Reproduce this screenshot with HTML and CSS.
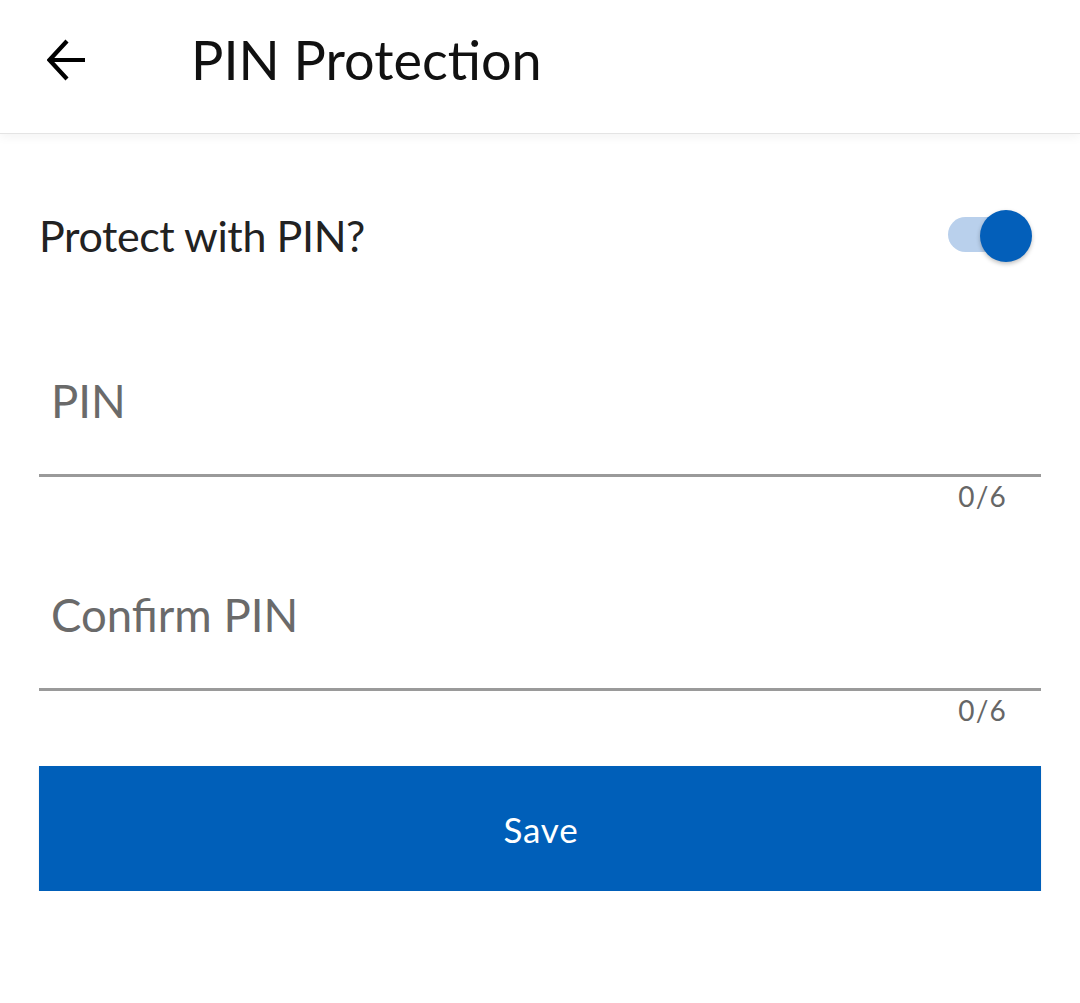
FILE: index.html
```html
<!DOCTYPE html>
<html>
<head>
<meta charset="utf-8">
<link rel="stylesheet" href="styles.css">
</head>
<body>
<header class="appbar">
  <svg class="back" width="40" height="48" viewBox="0 0 40 48">
    <path d="M38 24H3 M20 5L2.5 24L20 43" fill="none" stroke="#000" stroke-width="4.2" stroke-linejoin="miter"/>
  </svg>
  <h1 class="title">PIN Protection</h1>
</header>
<main class="content">
  <div class="toggle-row">
    <span class="toggle-label">Protect with PIN?</span>
    <div class="switch">
      <div class="track"></div>
      <div class="thumb"></div>
    </div>
  </div>
  <div class="field first">
    <div class="input"><span class="placeholder">PIN</span></div>
    <div class="counter">0/6</div>
  </div>
  <div class="field second">
    <div class="input"><span class="placeholder">Confirm PIN</span></div>
    <div class="counter">0/6</div>
  </div>
  <button class="save">Save</button>
</main>
</body>
</html>
```
FILE: styles.css
```css
html, body {
  margin: 0;
  padding: 0;
  background: #fff;
  font-family: Lato, "Noto Sans", sans-serif;
}
.appbar {
  height: 134px;
  box-sizing: border-box;
  display: flex;
  align-items: center;
  padding: 0 0 14px 47px;
  border-bottom: 1px solid #e4e4e4;
  box-shadow: 0 3px 10px rgba(0,0,0,0.05);
  position: relative;
}
.back {
  display: block;
  flex: none;
}
.title {
  margin: 0 0 0 104px;
  font-size: 54px;
  font-weight: 400;
  color: #111;
  line-height: 60px;
}
.content {
  padding: 0 39px;
}
.toggle-row {
  margin-top: 52px;
  height: 100px;
  display: flex;
  align-items: center;
  justify-content: space-between;
}
.toggle-label {
  font-size: 43px;
  letter-spacing: -0.4px;
  color: #222;
  line-height: 52px;
}
.switch {
  position: relative;
  width: 84px;
  height: 52px;
  margin-right: 9px;
}
.track {
  position: absolute;
  left: 0;
  top: 7px;
  width: 72px;
  height: 35px;
  border-radius: 18px;
  background: #b9d0ec;
}
.thumb {
  position: absolute;
  right: 0;
  top: 0;
  width: 52px;
  height: 52px;
  border-radius: 50%;
  background: #035fba;
  box-shadow: 0 2px 4px rgba(0,0,0,0.25);
}
.field.first { margin-top: 87px; }
.field.second { margin-top: 74px; }
.input {
  padding: 0 0 45px 12px;
  border-bottom: 3px solid #9a9a9a;
}
.placeholder {
  display: block;
  font-size: 45.5px;
  line-height: 56px;
  color: #6a6a6a;
}
.counter {
  margin-top: 2px;
  text-align: right;
  padding-right: 34px;
  font-size: 28px;
  letter-spacing: 1.2px;
  line-height: 34px;
  color: #666;
}
.save {
  display: flex;
  align-items: center;
  justify-content: center;
  width: 100%;
  height: 125px;
  margin-top: 39px;
  border: none;
  background: #005fb9;
  color: #fff;
  font-family: Lato, "Noto Sans", sans-serif;
  font-size: 35px;
  letter-spacing: 0.8px;
  padding: 0 0 0 2px;
  box-shadow: 0 1px 2px rgba(0,0,0,0.1);
}
```
